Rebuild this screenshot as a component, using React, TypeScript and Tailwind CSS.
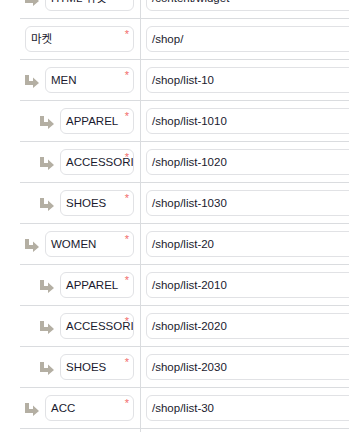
import React from 'react';

type Row = { name: string; path: string; level: number };

const rows: Row[] = [
    { name: 'HTML 위젯', path: '/content/widget', level: 1 },
    { name: '마켓', path: '/shop/', level: 0 },
    { name: 'MEN', path: '/shop/list-10', level: 1 },
    { name: 'APPAREL', path: '/shop/list-1010', level: 2 },
    { name: 'ACCESSORIES', path: '/shop/list-1020', level: 2 },
    { name: 'SHOES', path: '/shop/list-1030', level: 2 },
    { name: 'WOMEN', path: '/shop/list-20', level: 1 },
    { name: 'APPAREL', path: '/shop/list-2010', level: 2 },
    { name: 'ACCESSORIES', path: '/shop/list-2020', level: 2 },
    { name: 'SHOES', path: '/shop/list-2030', level: 2 },
    { name: 'ACC', path: '/shop/list-30', level: 1 },
    { name: 'BAG', path: '/shop/list-3010', level: 2 },
];

const SubArrow = () => (
    <svg width="14" height="13" viewBox="0 0 14 13" className="shrink-0">
        <path d="M0 0H4V6H8V2.5L14 8L8 13V10H0Z" fill="#b4afa3" />
    </svg>
);

const App = () => {
    return (
        <div
            className="w-[349px] h-[432px] overflow-hidden bg-white"
            style={{ fontFamily: '"Liberation Sans", Arial, "Noto Sans CJK KR", sans-serif' }}
        >
            <div className="-mt-[22px] ml-[20px]">
                {rows.map((row, idx) => (
                    <div key={idx} className="flex h-[41px] border-b border-[#dadcdf]">
                        {/* menu name */}
                        <div className="w-[121px] shrink-0 flex items-center border-r border-[#dadcdf] pl-[5px] pr-[6px]">
                            {row.level === 2 && <div className="w-[15px] shrink-0" />}
                            {row.level > 0 && (
                                <div className="mr-[6px] mt-[2px] flex items-center">
                                    <SubArrow />
                                </div>
                            )}
                            <div className="relative flex-1 min-w-0 h-[26px] border border-[#e1e2e5] rounded-[6px] flex items-center pl-[5px] overflow-hidden">
                                <span className="mt-[2px] text-[11.5px] text-[#1a1a2e] whitespace-nowrap">{row.name}</span>
                                <span className="absolute top-[1px] right-[4px] text-[11px] leading-[12px] text-[#f26b6b]">*</span>
                            </div>
                        </div>
                        {/* url */}
                        <div className="flex-1 flex items-center pl-[5px] overflow-hidden">
                            <div className="w-[260px] shrink-0 h-[26px] border border-[#e1e2e5] rounded-[6px] flex items-center pl-[5px]">
                                <span className="mt-[2px] text-[11.5px] text-[#1a1a2e] whitespace-nowrap">{row.path}</span>
                            </div>
                        </div>
                    </div>
                ))}
            </div>
        </div>
    );
};

export default App;
